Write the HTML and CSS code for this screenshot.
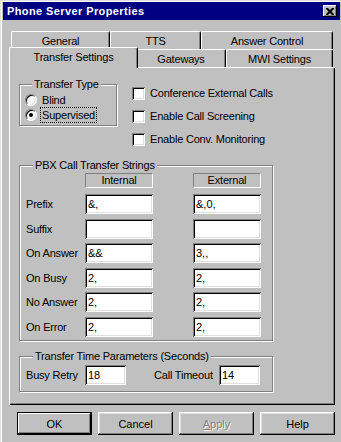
FILE: index.html
```html
<!DOCTYPE html>
<html lang="en">
<head>
	<meta charset="UTF-8" />
	<title>Phone Server Properties</title>
	<link rel="stylesheet" href="styles.css">
</head>
<body>
	<div class="window">
		<div class="titlebar">
			<span class="title">Phone Server Properties</span>
			<button class="close" title="Close">
				<svg width="8" height="7" viewBox="0 0 8 7"><path d="M0 0h2l2 2 2-2h2v1l-2.5 2.5L8 6v1H6L4 5 2 7H0V6l2.5-2.5L0 1z" fill="#000"/></svg>
			</button>
		</div>

		<div class="content">
			<div class="tabrow">
				<div class="tab tab-general">General</div>
				<div class="tab tab-tts">TTS</div>
				<div class="tab tab-answer">Answer Control</div>
			</div>
			<div class="tabrow tabrow-front">
				<div class="tab tab-transfer selected">Transfer Settings</div>
				<div class="tab tab-gateways">Gateways</div>
				<div class="tab tab-mwi">MWI Settings</div>
			</div>

			<div class="panel">
				<div class="top-section">
					<fieldset class="group group-type">
						<legend>Transfer Type</legend>
						<label class="radio"><span class="radio-dot"></span>Blind</label>
						<label class="radio checked"><span class="radio-dot"></span><span class="focus">Supervised</span></label>
					</fieldset>
					<div class="checklist">
						<label class="check"><span class="check-box"></span>Conference External Calls</label>
						<label class="check"><span class="check-box"></span>Enable Call Screening</label>
						<label class="check"><span class="check-box"></span>Enable Conv. Monitoring</label>
					</div>
				</div>

				<fieldset class="group group-pbx">
					<legend>PBX Call Transfer Strings</legend>
					<div class="pbx-grid">
						<span></span>
						<div class="col-head">Internal</div>
						<div class="col-head">External</div>

						<span class="field-label">Prefix</span>
						<input class="field" type="text" value="&amp;,">
						<input class="field" type="text" value="&amp;,0,">

						<span class="field-label">Suffix</span>
						<input class="field" type="text" value="">
						<input class="field" type="text" value="">

						<span class="field-label">On Answer</span>
						<input class="field" type="text" value="&amp;&amp;">
						<input class="field" type="text" value="3,,">

						<span class="field-label">On Busy</span>
						<input class="field" type="text" value="2,">
						<input class="field" type="text" value="2,">

						<span class="field-label">No Answer</span>
						<input class="field" type="text" value="2,">
						<input class="field" type="text" value="2,">

						<span class="field-label">On Error</span>
						<input class="field" type="text" value="2,">
						<input class="field" type="text" value="2,">
					</div>
				</fieldset>

				<fieldset class="group group-time">
					<legend>Transfer Time Parameters (Seconds)</legend>
					<div class="time-row">
						<span class="field-label">Busy Retry</span>
						<input class="field field-short" type="text" value="18">
						<span class="field-label timeout-label">Call Timeout</span>
						<input class="field field-short" type="text" value="14">
					</div>
				</fieldset>
			</div>

			<div class="buttons">
				<button class="btn btn-default">OK</button>
				<button class="btn">Cancel</button>
				<button class="btn" disabled><u>A</u>pply</button>
				<button class="btn">Help</button>
			</div>
		</div>
	</div>
</body>
</html>
```

FILE: styles.css
```css
body {
	margin: 0;
	background: #c0c0c0;
	color: #000;
	font-family: "Liberation Sans", Arial, sans-serif;
	font-size: 11px;
	letter-spacing: -0.2px;
}

.window {
	width: 341px;
	height: 442px;
	box-sizing: border-box;
	padding: 2px 1px 0 3px;
	background: #c0c0c0;
	box-shadow: inset 1px 1px #dfdfdf, inset 2px 2px #fff;
}

/* barra de titulo */
.titlebar {
	height: 18px;
	display: flex;
	align-items: center;
	justify-content: space-between;
	padding: 0 3px 0 4px;
	background: #000080;
	color: #fff;
}

.title {
	font-weight: bold;
	font-size: 11px;
	letter-spacing: 0.4px;
}

.close {
	width: 14px;
	height: 12px;
	padding: 0;
	border: none;
	display: flex;
	align-items: center;
	justify-content: center;
	background: #c0c0c0;
	box-shadow: inset -1px -1px #000, inset 1px 1px #fff, inset -2px -2px #808080;
}

.content {
	padding: 11px 0 0 6px;
}

/* pestañas */
.tabrow {
	display: flex;
	margin-left: 2px;
	height: 18px;
}

.tabrow-front {
	align-items: flex-end;
}

.tab {
	box-sizing: border-box;
	height: 18px;
	display: flex;
	align-items: center;
	justify-content: center;
	border-left: 1px solid #fff;
	border-top: 1px solid #fff;
	border-right: 1px solid #000;
	border-radius: 2px 2px 0 0;
	box-shadow: inset -1px 0 #808080;
	background: #c0c0c0;
}

.tab-general { width: 99px; }
.tab-tts { width: 91px; }
.tab-answer { width: 132px; }
.tab-transfer { width: 125px; }
.tab-gateways { width: 90px; }
.tab-mwi { width: 107px; }

.tab.selected {
	position: relative;
	z-index: 1;
	width: 129px;
	height: 21px;
	margin: -2px -2px -1px;
	padding-bottom: 3px;
}

/* panel */
.panel {
	box-sizing: border-box;
	width: 326px;
	height: 338px;
	padding: 11px 0 0 10px;
	box-shadow: inset 1px 1px #fff, inset -1px -1px #000, inset -2px -2px #808080;
}

.group {
	margin: 0;
	padding: 0;
	border: 1px solid #808080;
	box-shadow: inset 1px 1px #fff, 1px 1px #fff;
}

.group legend {
	margin-left: 7px;
	padding: 0 2px;
	line-height: 13px;
	background: #c0c0c0;
}

.top-section {
	display: flex;
	align-items: flex-start;
}

.group-type {
	width: 98px;
	box-sizing: border-box;
	padding: 1.5px 0 2px 5px;
}

.radio, .check {
	display: flex;
	align-items: center;
	height: 15px;
	gap: 5px;
}

.radio-dot {
	width: 12px;
	height: 12px;
	box-sizing: border-box;
	border-radius: 50%;
	background: #fff;
	border: 1px solid;
	border-color: #808080 #fff #fff #808080;
	box-shadow: inset 1px 1px #000, inset -1px -1px #dfdfdf;
	display: flex;
	align-items: center;
	justify-content: center;
}

.radio.checked .radio-dot::after {
	content: "";
	width: 4px;
	height: 4px;
	border-radius: 50%;
	background: #000;
}

.focus {
	outline: 1px dotted #000;
	padding: 0 1px;
	margin-left: -1px;
	line-height: 14px;
}

.checklist {
	margin-left: 15px;
	padding-top: 7.5px;
	display: flex;
	flex-direction: column;
	gap: 8px;
}

.check-box {
	width: 13px;
	height: 13px;
	box-sizing: border-box;
	background: #fff;
	box-shadow: inset 1px 1px #808080, inset -1px -1px #fff, inset 2px 2px #000, inset -2px -2px #dfdfdf;
}

/* cadenas PBX */
.group-pbx {
	width: 254px;
	box-sizing: border-box;
	margin-top: 12px;
	padding: 1.5px 0 3.5px 6px;
}

.pbx-grid {
	display: grid;
	grid-template-columns: 59px 108px 68px;
	row-gap: 4.6px;
	align-items: center;
}

.col-head {
	width: 68px;
	height: 15px;
	box-sizing: border-box;
	margin-bottom: 1.4px;
	text-align: center;
	line-height: 13px;
	border: 1px solid;
	border-color: #808080 #fff #fff #808080;
}

.field {
	width: 68px;
	height: 20px;
	box-sizing: border-box;
	margin: 0;
	padding: 0 0 0 3px;
	border: none;
	background: #fff;
	font: inherit;
	color: #000;
	box-shadow: inset 1px 1px #808080, inset -1px -1px #fff, inset 2px 2px #000, inset -2px -2px #dfdfdf;
	outline: none;
}

.field-label {
	white-space: nowrap;
}

/* tiempos */
.group-time {
	width: 254px;
	box-sizing: border-box;
	margin-top: 9px;
	padding: 1.5px 0 6.5px 6px;
}

.time-row {
	display: flex;
	align-items: center;
}

.time-row .field-label {
	width: 59px;
}

.field-short {
	width: 41px;
}

.time-row .timeout-label {
	width: 65px;
	margin-left: 28px;
}

/* botones */
.buttons {
	display: flex;
	gap: 6px;
	margin: 7px 0 0 8px;
}

.btn {
	width: 75px;
	height: 23px;
	padding: 0;
	border: none;
	background: #c0c0c0;
	font: inherit;
	color: #000;
	box-shadow: inset -1px -1px #000, inset 1px 1px #fff, inset -2px -2px #808080, inset 2px 2px #dfdfdf;
}

.btn-default {
	box-shadow: inset 0 0 0 1px #000, inset -2px -2px #000, inset 2px 2px #fff, inset -3px -3px #808080;
}

.btn:disabled {
	color: #808080;
	text-shadow: 1px 1px #fff;
}
```
